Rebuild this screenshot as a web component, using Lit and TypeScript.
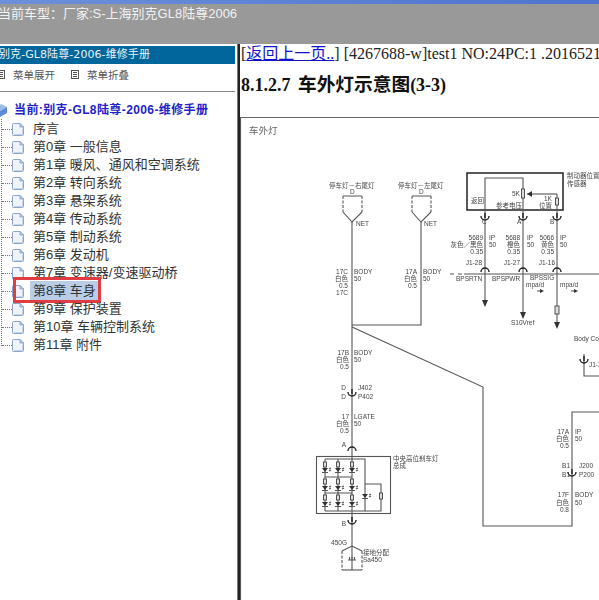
import { LitElement, html, css, svg } from "lit";
import { customElement } from "lit/decorators.js";

const CHAPTERS = ["序言","第0章 一般信息","第1章 暖风、通风和空调系统","第2章 转向系统","第3章 悬架系统","第4章 传动系统","第5章 制动系统","第6章 发动机","第7章 变速器/变速驱动桥","第8章 车身","第9章 保护装置","第10章 车辆控制系统","第11章 附件"];

type T = [number, number, string, number?];
const TEXTS: T[] = [
  [329,188,"停车灯－右尾灯"],[350,194,"D"],[356,226,"NET"],
  [398,188,"停车灯－左尾灯"],[419,194,"D"],[424,226,"NET"],
  [348,274,"17C",1],[354,274,"BODY"],[348,281,"白色",1],[354,281,"50"],[348,288,"0.5",1],[348,295,"17C",1],
  [417,274,"17A",1],[423,274,"BODY"],[417,281,"白色",1],[423,281,"50"],[417,288,"0.5",1],
  [567,178,"制动器位置"],[567,186,"传感器"],[471,203,"返回"],[496,208,"参考电压"],[512,196,"5K"],[544,201,"1K"],[539,208,"位置"],
  [482,224,"C"],[517,224,"A"],[550,224,"B"],
  [483,240,"5689",1],[489,240,"IP"],[483,247,"灰色／黑色",1],[489,247,"50"],[483,254,"0.35",1],
  [520,240,"5688",1],[527,240,"IP"],[520,247,"橙色",1],[527,247,"50"],[520,254,"0.35",1],
  [554,240,"5066",1],[560,240,"IP"],[554,247,"黄色",1],[560,247,"50"],[554,254,"0.35",1],
  [482,265,"J1-28",1],[520,265,"J1-27",1],[555,265,"J1-16",1],
  [456,281,"BPSRTN"],[492,281,"BPSPWR"],[530,280,"BPSSIG"],[526,287,"mpa/d"],[560,287,"mpa/d"],[511,325,"S10Vref"],
  [574,341,"Body Co"],[589,367,"J1-3"],
  [349,355,"17B",1],[354,355,"BODY"],[349,362,"白色",1],[354,362,"50"],[349,369,"0.5",1],
  [346,390,"D",1],[358,390,"J402"],[346,399,"D",1],[358,399,"P402"],
  [349,419,"17",1],[354,419,"LGATE"],[349,426,"白色",1],[354,426,"50"],[349,433,"0.5",1],[346,447,"A",1],
  [393,461,"中央高位刹车灯"],[393,468,"总成"],[346,526,"B",1],[347,545,"450G",1],[363,555,"接地分配"],[363,562,"Sa450"],
  [569,434,"17A",1],[575,434,"IP"],[569,441,"白色",1],[575,441,"50"],[569,448,"0.5",1],
  [570,468,"B1",1],[579,468,"J200"],[570,477,"B1",1],[579,477,"P200"],
  [569,497,"17F",1],[575,497,"BODY"],[569,505,"白色",1],[575,505,"50"],[569,512,"0.8",1],
];

const LINES = [
  "M352 222V570","M421 222V325H352","M352 327L483 387V526H572V412H599","M584 354V376H599",
  "M485 210V178H523V210","M557 194V210","M485 210V300","M523 210V312","M557 210V322",
  "M464 274H599","M450 274H454M458 274H462",
  "M325 459H365V511H325","M325 477H352M325 493H352","M365 484H381V511H365",
  "M325 459V511M338 459V511",
  "M342 570H362","M342 551L352 546L362 551",
  "M527 194H557",
  "M537 291H540M571 291H574",
];

const hookDown = (x: number, y: number) => svg`<path class="w" d="M${x} ${y-5}V${y}"/><path class="w" d="M${x-4} ${y-2}A4 4 0 0 0 ${x+4} ${y-2}"/>`;
const hookUp = (x: number, y: number) => svg`<path class="w" d="M${x-4} ${y+2}A4 4 0 0 1 ${x+4} ${y+2}"/>`;
const arrowDown = (x: number, y: number, h = 6) => svg`<path class="f" d="M${x-3} ${y}H${x+3}L${x} ${y+h}Z"/>`;
const resistor = (x: number, y: number, w: number, h: number) => svg`<rect class="r" x=${x-w/2} y=${y} width=${w} height=${h}/>`;
const diode = (x: number, y: number) => svg`<path class="f" d="M${x-3} ${y}H${x+3}L${x} ${y+4}Z"/><path class="l" d="M${x-3} ${y+4.5}H${x+3}M${x+4} ${y+1}l2 -1M${x+4} ${y+3}l2 -1"/>`;

@customElement("app-root")
export class AppRoot extends LitElement {
  static styles = css`
    :host { display: block; width: 599px; height: 600px; overflow: hidden; background: #fff; }
    .page { display: flex; flex-direction: column; height: 600px; }
    .strip { height: 4px; flex: none; background: linear-gradient(90deg, #6d90dc, #4d74cd); }
    .top { height: 40px; flex: none; background: #999; color: #f2f2f2; margin-left: -2px;
      font: 13px/19px "Liberation Sans", "Noto Sans CJK SC", sans-serif; white-space: nowrap; }
    .main { flex: 1; display: flex; min-height: 0; }
    .left { width: 235px; flex: none; display: flex; flex-direction: column; overflow: hidden; background: #fff; }
    .title { margin-top: 2px; height: 18px; flex: none; background: #00669b; color: #e8f2f7; letter-spacing: .08px;
      font: 11px/18px "DejaVu Sans", "Noto Sans CJK SC", sans-serif; white-space: nowrap; text-indent: -1px; }
    .tools { height: 28px; flex: none; border-bottom: 1px solid #888; display: flex; align-items: flex-start; padding-top: 0; margin-left: -3px;
      font: 10.5px/22px "Noto Sans CJK SC", sans-serif; color: #555; box-sizing: border-box; }
    .tools svg { margin-top: 6px; flex: none; }
    .tools span { margin: 0 16px 0 8px; }
    .tree { position: relative; padding-top: 10px; flex: 1; }
    .cur { height: 18px; display: flex; align-items: center; gap: 7px; margin-left: -6px; margin-top: -1px; margin-bottom: 1px;
      font: bold 12px/18px "Liberation Sans", "Noto Sans CJK SC", sans-serif; color: #2323c8; letter-spacing: .4px; white-space: nowrap; }
    .cur svg { flex: none; }
    .guide { position: absolute; left: 1px; top: 27px; width: 10px; height: 227px; border-left: 1px dotted #777; }
    .row { position: relative; height: 18px; display: flex; align-items: center; padding-left: 12px; gap: 9px;
      font: 13px/18px "Liberation Sans", "Noto Sans CJK SC", sans-serif; color: #333; white-space: nowrap; }
    .row::before { content: ""; position: absolute; left: 2px; width: 10px; top: 9px; border-top: 1px dotted #777; }
    .row svg { flex: none; }
    .row.sel .lab { background: #b9cde6; margin-left: -3px; padding: 0 3px; height: 20px; line-height: 20px; }
    .row.sel::after { content: ""; position: absolute; left: 13px; top: -5px; width: 82px; height: 20px; border: 3px solid #e03c44; }
    .split { width: 5px; flex: none; background: linear-gradient(90deg, #fff 0 2px, #777 2px 3px, #222 3px); }
    .right { flex: 1; min-width: 0; overflow: hidden; background: #fff; font-family: "Liberation Serif", "Noto Sans CJK SC", serif; }
    .nav { font-size: 16px; line-height: 18px; color: #222; white-space: nowrap; padding-left: 1px; margin-top: 1px; }
    .nav a { color: #1212cc; text-decoration: underline; }
    h1 { margin: 8px 0 0 1px; font-size: 18px; line-height: 28px; font-weight: bold; color: #111; white-space: nowrap; }
    h1 span { font-size: 18.7px; margin-left: 3px; }
    .fig { display: block; margin-top: 18px; border-top: 1px solid #666; filter: blur(.45px); }
    .fig .l, .fig .w { fill: none; stroke: #555; stroke-width: 1.1; }
    .fig .w { stroke: #222; stroke-width: 1.4; }
    .fig .f { fill: #333; }
    .fig .r { fill: #ddd; stroke: #444; stroke-width: .9; }
    .fig .box { fill: none; stroke: #222; stroke-width: 1.5; }
    .fig .dash { fill: none; stroke: #444; stroke-dasharray: 3 1.5; }
    .fig text { font: 6.5px "Liberation Sans", "Noto Sans CJK SC", sans-serif; fill: #444; }
    .fig text.end { text-anchor: end; }
    .fig text.big { font-size: 9.5px; fill: #666; }
  `;

  private doc() {
    return html`<svg width="12" height="13" viewBox="0 0 12 13"><path d="M1.5 .5H8L11.500 4V11.500Q11.500 12.500 10.500 12.500H1.500Q.5 12.500 .5 11.500V1.500Q.5 .5 1.500 .5Z" fill="#f0f4fa" stroke="#8aa6cc"/><path d="M8 .5V4H11.500Z" fill="#c7d9ee" stroke="#8aa6cc"/><path d="M2 11.500H10.500V6" fill="none" stroke="#c3d3e8"/></svg>`;
  }
  private bookIcon() {
    return html`<svg width="8" height="9" viewBox="0 0 8 9"><rect x=".5" y=".5" width="7" height="8" fill="#fff" stroke="#555"/><path d="M2 2.500H6M2 4.500H6M2 6.500H6" stroke="#555"/></svg>`;
  }

  private figure() {
    const cols = [325, 338, 352];
    return html`<svg class="fig" width="360" height="482" viewBox="240 118 360 482">
      <path class="l" d="M240.500 118V600"/>
      <text class="big" x="249" y="134">车外灯</text>
      <rect class="box" x="467" y="173" width="96" height="37"/>
      <rect class="l" x="316.500" y="456.500" width="74" height="57"/>
      <path class="dash" d="M342 551V570M362 551V570"/>
      <path class="dash" d="M343 196V212M362 196V212M412 196V212M431 196V212"/>
      <path class="l" d="M343 196H362M343 212L352 222L362 212M412 196H431M412 212L421 222L431 212"/>
      ${LINES.map((d) => svg`<path class="l" d=${d}/>`)}
      ${hookDown(485, 218)}${hookDown(523, 218)}${hookDown(557, 218)}
      ${hookUp(485, 270)}${hookUp(523, 270)}${hookUp(557, 270)}
      ${hookDown(352, 394)}${hookUp(352, 449)}${hookDown(352, 522)}
      ${hookDown(584, 361)}${hookDown(572, 474)}
      ${arrowDown(485, 300, 7)}${arrowDown(523, 312, 7)}${arrowDown(557, 322, 7)}
      <path class="f" d="M527 194L532 191V197Z"/>
      <path class="f" d="M540 289L544 291L540 293Z"/><path class="f" d="M574 289L578 291L574 293Z"/>
      ${resistor(523, 189, 3, 9)}${resistor(557, 198, 3, 7)}${resistor(557, 306, 4, 8)}${resistor(381, 493, 3, 6)}
      ${cols.map((x) => svg`${resistor(x, 462, 3, 5)}${diode(x, 468)}${resistor(x, 479, 3, 5)}${diode(x, 486)}${resistor(x, 495, 3, 5)}${diode(x, 502)}`)}
      ${diode(365, 494)}
      <path class="l" d="M348 560H356M349.500 560V557M352 560V557M354.500 560V557"/>
      ${TEXTS.map(([x, y, t, e]) => svg`<text class=${e ? "end" : ""} x=${x} y=${y}>${t}</text>`)}
    </svg>`;
  }

  render() {
    return html`<div class="page">
      <div class="strip"></div>
      <div class="top">当前车型：厂家:S-上海别克GL8陆尊2006</div>
      <div class="main">
        <div class="left">
          <div class="title">别克-GL8陆尊-2006-维修手册</div>
          <div class="tools">${this.bookIcon()}<span>菜单展开</span>${this.bookIcon()}<span>菜单折叠</span></div>
          <div class="tree">
            <div class="guide"></div>
            <div class="cur"><svg width="13" height="15" viewBox="0 0 13 15"><path d="M1 5L7 1L13 4L6 8Z" fill="#9dbdea"/><path d="M1 5L6 8V14L1 11Z" fill="#2f5fb8"/><path d="M6 8L13 4V10L6 14Z" fill="#5a8ad8"/></svg><span>当前:别克-GL8陆尊-2006-维修手册</span></div>
            ${CHAPTERS.map((c, i) => html`<div class="row ${i === 9 ? "sel" : ""}">${this.doc()}<span class="lab">${c}</span></div>`)}
          </div>
        </div>
        <div class="split"></div>
        <div class="right">
          <div class="nav">[<a>返回上一页..</a>] [4267688-w]test1 NO:24PC:1 .2016521</div>
          <h1>8.1.2.7 <span>车外灯示意图</span>(3-3)</h1>
          ${this.figure()}
        </div>
      </div>
    </div>`;
  }
}
